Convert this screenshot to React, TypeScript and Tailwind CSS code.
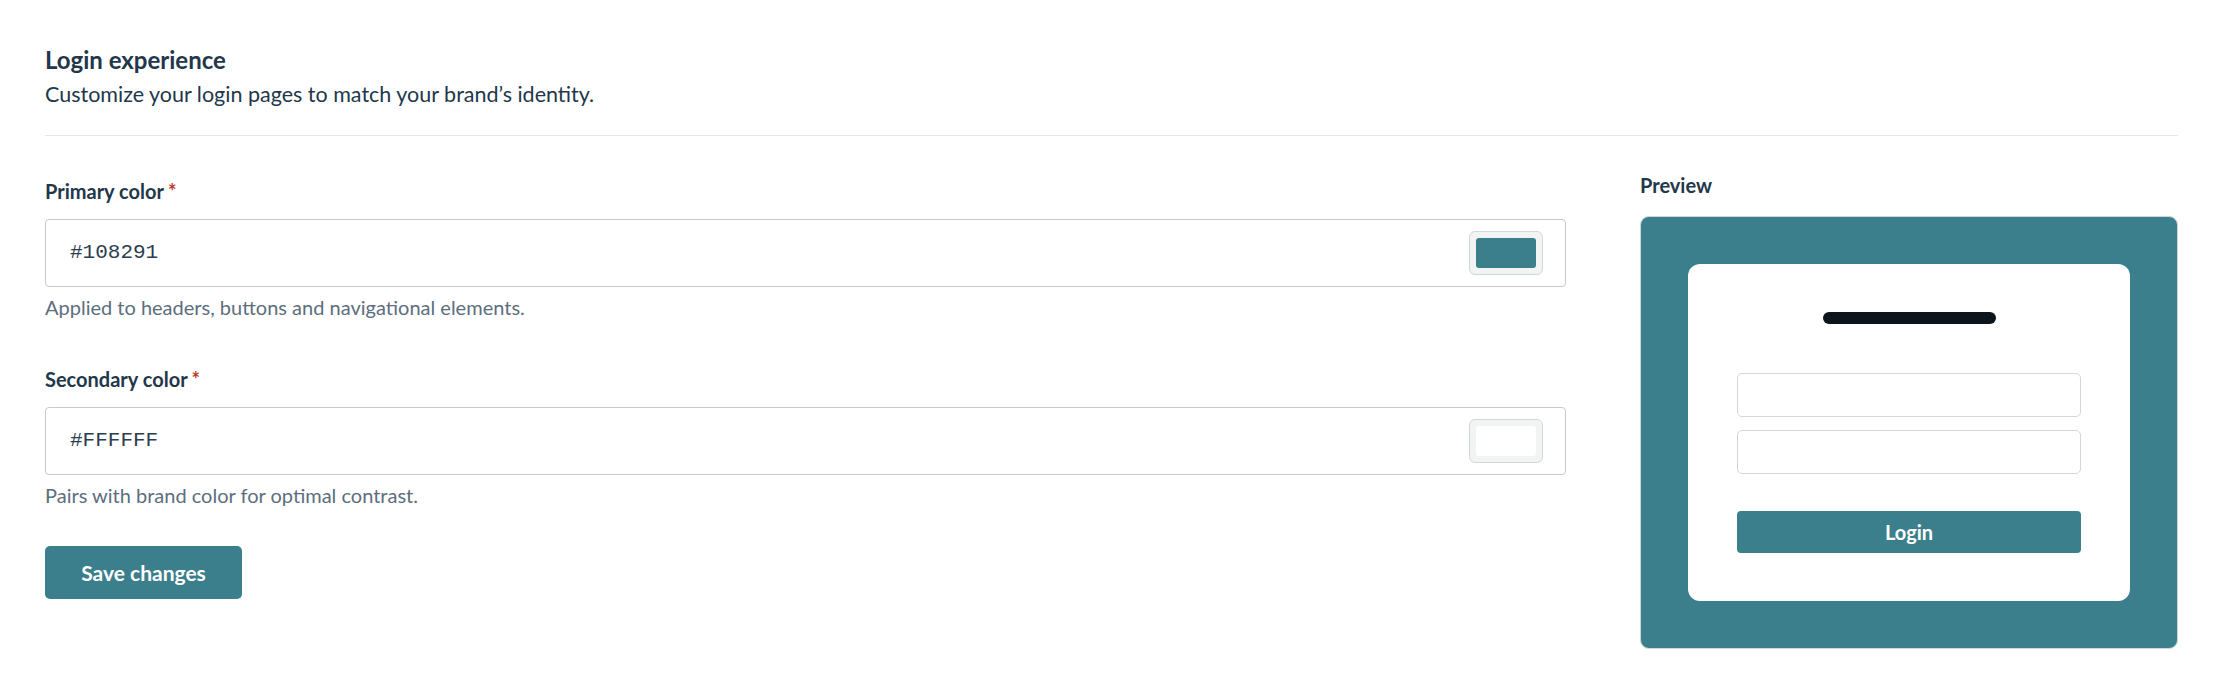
import { useState } from "react";

const TEAL = "#3b7f8c";

function ColorField({
  label,
  value,
  hint,
  swatch,
}: {
  label: string;
  value: string;
  hint: string;
  swatch: string;
}) {
  return (
    <div className="flex flex-col">
      <label className="text-[20px] leading-[26px] font-bold text-[#22374a]">
        {label}
        <span className="ml-[4px] text-[#c0392b]">*</span>
      </label>
      <div className="mt-[15px] flex h-[68px] items-center justify-between rounded-[4px] border border-[#c5cad1] bg-white pl-[24px] pr-[22px]">
        <span className="font-['Liberation_Mono',monospace] text-[21px] text-[#2b3d4e]">{value}</span>
        <div className="flex h-[44px] w-[74px] items-center justify-center rounded-[6px] border border-[#d3d7dc] bg-[#f2f3f3]">
          <div className="h-[30px] w-[60px] rounded-[3px]" style={{ backgroundColor: swatch }} />
        </div>
      </div>
      <p className="mt-[7px] text-[20px] leading-[26px] text-[#5c6e7e]">{hint}</p>
    </div>
  );
}

export default function App() {
  const [primary] = useState("#108291");
  const [secondary] = useState("#FFFFFF");

  return (
    <div className="min-h-[698px] bg-white pl-[45px] pr-[40px] pt-[45px] font-['Lato',sans-serif]">
      {/* Header */}
      <h1 className="text-[24px] leading-[30px] font-bold text-[#22374a]">Login experience</h1>
      <p className="mt-[5px] text-[21.5px] leading-[28px] text-[#22374a]">
        Customize your login pages to match your brand’s identity.
      </p>
      <div className="mt-[27px] h-px bg-[#e4e7ea]" />

      <div className="flex items-start gap-[74px]">
        {/* Form */}
        <div className="flex flex-1 flex-col pt-[42px]">
          <ColorField
            label="Primary color"
            value={primary}
            hint="Applied to headers, buttons and navigational elements."
            swatch={TEAL}
          />
          <div className="mt-[46px]">
            <ColorField
              label="Secondary color"
              value={secondary}
              hint="Pairs with brand color for optimal contrast."
              swatch="#ffffff"
            />
          </div>
          <div className="mt-[38px]">
            <button
              type="button"
              className="h-[53px] w-[197px] rounded-[5px] bg-[#3b7f8c] text-[21px] font-bold text-white"
            >
              Save changes
            </button>
          </div>
        </div>

        {/* Preview */}
        <div className="flex w-[538px] flex-col pt-[36px]">
          <span className="text-[20px] leading-[26px] font-bold text-[#22374a]">Preview</span>
          <div className="mt-[18px] flex h-[433px] items-center justify-center rounded-[9px] border border-[#cdd6d8] bg-[#3b7f8c]">
            <div className="flex h-[337px] w-[442px] flex-col items-center rounded-[12px] bg-white px-[49px] pt-[48px]">
              <div className="h-[12px] w-[173px] rounded-full bg-[#0b151b]" />
              <div className="mt-[49px] h-[44px] w-full rounded-[5px] border border-[#d3d7dc] bg-white" />
              <div className="mt-[13px] h-[44px] w-full rounded-[5px] border border-[#d3d7dc] bg-white" />
              <button
                type="button"
                className="mt-[37px] h-[42px] w-full rounded-[4px] bg-[#3b7f8c] text-[20px] font-bold text-white"
              >
                Login
              </button>
            </div>
          </div>
        </div>
      </div>
    </div>
  );
}
